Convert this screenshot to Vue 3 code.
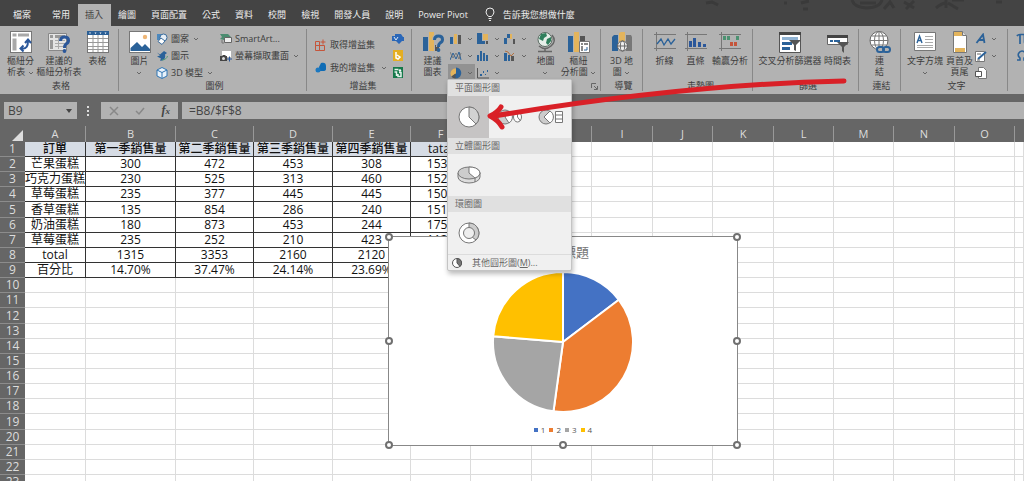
<script setup>
import { ref, computed } from 'vue'

const tabs = ['常用', '插入', '繪圖', '頁面配置', '公式', '資料', '校閱', '檢視', '開發人員', '說明', 'Power Pivot']
const activeTab = ref('插入')
const cellName = ref('B9')
const formula = ref('=B8/$F$8')

const columns = [...'ABCDEFGHIJKLMNO', '']
const cells = [
  ['訂單', '第一季銷售量', '第二季銷售量', '第三季銷售量', '第四季銷售量', 'tatal'],
  ['芒果蛋糕', '300', '472', '453', '308', '1533'],
  ['巧克力蛋糕', '230', '525', '313', '460', '1528'],
  ['草莓蛋糕', '235', '377', '445', '445', '1502'],
  ['香草蛋糕', '135', '854', '286', '240', '1515'],
  ['奶油蛋糕', '180', '873', '453', '244', '1750'],
  ['草莓蛋糕', '235', '252', '210', '423', '1120'],
  ['total', '1315', '3353', '2160', '2120', '8948'],
  ['百分比', '14.70%', '37.47%', '24.14%', '23.69%', '']
]
const rows = Array.from({ length: 23 }, (_, i) => cells[i] || [])

const series = [
  { label: '1', value: 14.7, color: '#4472c4' },
  { label: '2', value: 37.47, color: '#ed7d31' },
  { label: '3', value: 24.14, color: '#a5a5a5' },
  { label: '4', value: 23.69, color: '#ffc000' }
]
const slices = computed(() => {
  let start = 0
  const point = (a) => `${70 + 70 * Math.sin(a)} ${70 - 70 * Math.cos(a)}`
  return series.map((s) => {
    const end = start + (s.value / 100) * Math.PI * 2
    const d = `M70 70L${point(start)}A70 70 0 0 1 ${point(end)}Z`
    start = end
    return { d, color: s.color }
  })
})

const chartTools = [
  { icon: 'column', label: '直條圖' },
  { icon: 'hierarchy', label: '階層圖' },
  { icon: 'waterfall', label: '瀑布圖' },
  { icon: 'line', label: '折線圖' },
  { icon: 'stat', label: '統計圖' },
  { icon: 'combo', label: '組合圖' },
  { icon: 'pie', label: '圓形圖' },
  { icon: 'scatter', label: '散佈圖' }
]
const handles = ['nw', 'ne', 'w', 'e', 'sw', 's', 'se']
</script>

<template>
  <svg class="sprite" aria-hidden="true">
    <symbol id="chev" viewBox="0 0 6 4"><path d="M1 1l2 2 2-2" fill="none" stroke="#666" /></symbol>
    <symbol id="pivot" viewBox="0 0 22 22">
      <rect x=".5" y=".5" width="21" height="21" fill="#fff" stroke="#777" />
      <path d="M2.500 2.500h4v3h-4zM8 2.500h11v3H8zM2.500 7.500h4v12h-4z" fill="#a8a8a8" />
      <path d="M11 17.500c6 1 7-3 7-8M15 12l3-3.500 3 3.500M13.500 14.500l-3 3 3 3" fill="none" stroke="#2b579a" stroke-width="2" />
    </symbol>
    <symbol id="pivotq" viewBox="0 0 22 22">
      <path d="M.5 2.500h18v17H.5z" fill="#e4e4e4" stroke="#888" />
      <path d="M2 4h3v3H2zM7 4h10v3H7zM2 9h3v9H2z" fill="#999" />
      <path d="M7 9.500h10M7 12.500h10M7 15.500h10M10.500 7v11" stroke="#aaa" />
      <path d="M12.500 10q0-4 4-4t4 3.500q0 2.500-2.500 3.500-1.500 1-1.500 4" fill="none" stroke="#2b579a" stroke-width="3" />
      <circle cx="16.500" cy="20" r="1.900" fill="#2b579a" />
    </symbol>
    <symbol id="table" viewBox="0 0 22 22">
      <rect x=".5" y=".5" width="21" height="21" fill="#fff" stroke="#777" />
      <path d="M0 0h22v4H0z" fill="#2b5f96" />
      <path d="M1 7.500h20M1 11.500h20M1 15.500h20M1 18.500h20M6 4v17M11 4v17M16 4v17" stroke="#999" />
      <path d="M2 1.500h2l-1 1.500zM7.500 1.500h2l-1 1.500zM12.500 1.500h2l-1 1.500zM17.500 1.500h2l-1 1.500z" fill="#fff" />
    </symbol>
    <symbol id="picture" viewBox="0 0 22 22">
      <rect x=".5" y=".5" width="21" height="21" fill="#fff" stroke="#777" />
      <path d="M1.500 20v-3l6.500-6 5 5 3-3 5 5v2z" fill="#2b6299" />
      <circle cx="16" cy="6" r="2.200" fill="#eeb677" />
    </symbol>
    <symbol id="shapes" viewBox="0 0 12 12">
      <path d="M1 1h6v6H1z" fill="#4c88bd" /><circle cx="7.500" cy="4.500" r="3.500" fill="#e7eef5" stroke="#3b6c9c" />
      <path d="M5 5l4 3-3 3.500-4-3z" fill="#fff" stroke="#3b6c9c" />
    </symbol>
    <symbol id="bird" viewBox="0 0 12 12">
      <path d="M1 2.500l3 2 4-3.500 3 2-2 1.500c1 4-2 7-5 6l1-2-4-2 3-1z" fill="#2b6299" />
      <path d="M6 10c3 0 5-2 5.500-4" fill="none" stroke="#4c9a76" />
    </symbol>
    <symbol id="cube" viewBox="0 0 12 12">
      <path d="M6 .5l5 2.500v6l-5 2.500-5-2.500V3z" fill="#e9f2fa" stroke="#2f74b3" />
      <path d="M1 3l5 2.500L11 3M6 5.500V11" fill="none" stroke="#2f74b3" />
    </symbol>
    <symbol id="smartart" viewBox="0 0 12 12">
      <path d="M0 1h8l3 3H5L4 7 0 6l2-2z" fill="#4b8c70" /><path d="M4.500 4.500h7v5h-7z" fill="#eee" stroke="#666" /><path d="M2 7v3h2" fill="none" stroke="#777" />
    </symbol>
    <symbol id="capture" viewBox="0 0 12 12">
      <path d="M2 1h9v6H2z" fill="#fff" /><path d="M0 6h2l1-1h2l1 1h1v5H0z" fill="#444" /><circle cx="3.500" cy="8.500" r="1.500" fill="#ddd" /><path d="M9.500 6.500v5M7 9h5" stroke="#2b579a" />
    </symbol>
    <symbol id="store" viewBox="0 0 12 12">
      <path d="M.5 2.500h4v4h-4zM.5 6.500h4v5h-4zM4.500 6.500h5v5h-5z" fill="none" stroke="#c5553b" /><path d="M8 .5v5M5.500 3h5" stroke="#c5553b" />
    </symbol>
    <symbol id="addin" viewBox="0 0 12 12"><path d="M6 1c3-1 5 0 5 3v3q0 2-3 2h-3q-1-1-1-4z" fill="#0f6cb5" /><circle cx="3" cy="8" r="2.500" fill="#1c78c0" /></symbol>
    <symbol id="visio" viewBox="0 0 12 12"><path d="M3 1h6l2 3h1v4h-2L7 11 4 8H0V3h3z" fill="#2a67b8" /><path d="M2 4l2 3 2-3" fill="none" stroke="#dce8f6" /></symbol>
    <symbol id="bing" viewBox="0 0 12 12"><path d="M1 0h10v11H1z" fill="#e4ae22" /><path d="M4 2v6l2 1 2-2-3-2" fill="none" stroke="#fff" stroke-width="1.500" /></symbol>
    <symbol id="people" viewBox="0 0 12 12"><path d="M1 0h10v11H1z" fill="#15784a" /><path d="M2.500 2.500h4M2.500 5h2v4M7 5.500h2v4H6V7" fill="none" stroke="#e4f2eb" stroke-width="1.500" /><circle cx="8" cy="3.500" r="1.200" fill="#fff" /></symbol>
    <symbol id="recommend" viewBox="0 0 22 22">
      <path d="M1 6h5v14H1z" fill="#2b6299" /><path d="M7 1h5v19H7z" fill="#e3b45c" /><path d="M13 14h4v6h-4z" fill="#555" />
      <path d="M12.500 9q0-4 4-4t4 3.500q0 2.500-2.500 3.500-1.500 1-1.500 4" fill="none" stroke="#b2b2b2" stroke-width="5" />
      <path d="M12.500 9q0-4 4-4t4 3.500q0 2.500-2.500 3.500-1.500 1-1.500 4" fill="none" stroke="#2b6299" stroke-width="3" /><circle cx="16.500" cy="19" r="1.900" fill="#2b6299" />
    </symbol>
    <symbol id="column" viewBox="0 0 12 12"><path d="M0 4h3v7H0z" fill="#2b6299" /><path d="M4 1h3v10H4z" fill="#e3b45c" /><path d="M8 2h3v9H8z" fill="#555" /></symbol>
    <symbol id="hierarchy" viewBox="0 0 12 12"><path d="M0 0h5v11H0z" fill="#2b6299" /><path d="M6 1h5v6H6z" fill="#e3b45c" /><path d="M5 8h3v3H5z" fill="#2b6299" /><path d="M9 8h2v3H9z" fill="#555" /></symbol>
    <symbol id="waterfall" viewBox="0 0 12 12"><path d="M0 5h3v6H0z" fill="#2b6299" /><path d="M3 1h3v4H3z" fill="#2b6299" /><path d="M6 1h2v5H6z" fill="#e3b45c" /><path d="M9 6h2v5H9z" fill="#555" /></symbol>
    <symbol id="line" viewBox="0 0 12 12"><path d="M0 10l3-7 3 6 3-7 2 8" fill="none" stroke="#2b6299" /><path d="M0 2l3 6 3-5 3 6 2-6" fill="none" stroke="#666" stroke-width=".7" /></symbol>
    <symbol id="stat" viewBox="0 0 12 12"><path d="M0 5h2v6H0zM3 1h2v10H3zM6 3h2v8H6zM9 5h2v6H9z" fill="#2b6299" /></symbol>
    <symbol id="combo" viewBox="0 0 12 12"><path d="M0 3h3v8H0zM4 5h2v6H4z" fill="#2b6299" /><path d="M7 6h3v5H7z" fill="#555" /><path d="M1 1l3 1 3 4 3-3" fill="none" stroke="#b5713f" /></symbol>
    <symbol id="pie" viewBox="0 0 12 12"><circle cx="5.500" cy="6.500" r="5" fill="#e3b45c" /><path d="M6 6.500V.5a5.500 5.500 0 1 1-4.500 9z" fill="#2b6299" /><path d="M5.500 6.500l-4 3a5 5 0 0 0 4 2z" fill="#555" /></symbol>
    <symbol id="scatter" viewBox="0 0 12 12"><path d="M.5 1v10H12" fill="none" stroke="#555" /><path d="M3 7h2v2H3zM6 4h1v2H6zM8 7h1v1H8zM10 3h1v2h-1z" fill="#2b6299" /></symbol>
    <symbol id="globe" viewBox="0 0 22 22">
      <circle cx="10" cy="8.500" r="7" fill="#e6efe9" stroke="#5a6b62" /><path d="M6 3l5-1 1 3-3 2-1 3-4-2zM12 8l4-2v4l-3 4-2-2z" fill="#2f7f5c" />
      <path d="M4 15q6 5 12 0t1-11M10 17.500V20M3 20.500h14" fill="none" stroke="#666" stroke-width="1.500" />
    </symbol>
    <symbol id="pivotchart" viewBox="0 0 22 22">
      <path d="M0 5h5v16H0z" fill="#2b6299" /><path d="M6 1h5v20H6z" fill="#e3b45c" /><path d="M12 5h5v7h-5z" fill="#555" />
      <path d="M11.500 10.500h10v11h-10z" fill="#fff" stroke="#777" /><path d="M13 12h2v2h-2zM16 12h4v2h-4zM13 15h2v5h-2z" fill="#888" /><path d="M16 19h3v-3" fill="none" stroke="#2b6299" />
    </symbol>
    <symbol id="map3d" viewBox="0 0 22 22">
      <path d="M1 6l2-2h4v16H1z" fill="#2b6299" /><path d="M8 2l2-1h4v12H8z" fill="#e3b45c" /><path d="M15 4h5l1 2v14h-6z" fill="#777" />
      <circle cx="11.500" cy="15" r="5" fill="#eee" stroke="#666" /><ellipse cx="11.500" cy="15" rx="2.200" ry="5" fill="none" stroke="#666" /><path d="M6.500 15h10" stroke="#666" />
    </symbol>
    <symbol id="sparkline" viewBox="0 0 22 22"><path d="M2.500 1v19M0 3.500h22M0 17.500h22" fill="none" stroke="#777" /><path d="M3 13l4-5 3 6 4-6 3 5 4-5" fill="none" stroke="#2b6299" stroke-width="1.300" /></symbol>
    <symbol id="sparkcol" viewBox="0 0 22 22"><path d="M2.500 1v19M0 3.500h22M0 17.500h22" fill="none" stroke="#777" /><path d="M4 10h3v6H4zM8 7h3v9H8zM13 11h3v5h-3zM18 13h3v3h-3z" fill="#2b579a" /></symbol>
    <symbol id="winloss" viewBox="0 0 22 22"><path d="M2.500 1v19M0 3.500h22M0 17.500h22" fill="none" stroke="#777" /><path d="M4 5h3v4H4zM8 5h3v4H8zM17 5h3v4h-3z" fill="#4d9272" /><path d="M11 11h3v4h-3zM15 11h3v4h-3z" fill="#c5553b" /></symbol>
    <symbol id="slicer" viewBox="0 0 22 22">
      <path d="M.5 1.500h21v20H.5z" fill="#fff" stroke="#555" /><path d="M0 1h22v3H0z" fill="#444" /><path d="M3 6h16v3H3z" fill="#8fb2d2" /><path d="M3 11h10v3H3zM3 16h8v3H3z" fill="#2b6299" />
      <path d="M10 9h12l-5 5v6l-2-1v-5z" fill="#555" />
    </symbol>
    <symbol id="timeline" viewBox="0 0 22 22">
      <path d="M.5 4.500h20v9H.5z" fill="#fff" stroke="#666" /><path d="M0 4h21v3H0z" fill="#444" /><path d="M3 10h3M7 10h6" stroke="#2b6299" stroke-width="2" /><path d="M10 11h12l-5 5v6l-2-2v-4z" fill="#555" />
    </symbol>
    <symbol id="link" viewBox="0 0 22 22">
      <circle cx="10" cy="9.500" r="9" fill="#fff" stroke="#666" /><path d="M1 9.500h18M3 5h14M3 14h14M10 .5v18" stroke="#777" /><ellipse cx="10" cy="9.500" rx="4.500" ry="9" fill="none" stroke="#777" />
      <rect x="8" y="16" width="7" height="5" rx="2.500" fill="#b2b2b2" stroke="#2b6299" stroke-width="2" /><rect x="14" y="16" width="7" height="5" rx="2.500" fill="none" stroke="#2b6299" stroke-width="2" />
    </symbol>
    <symbol id="textbox" viewBox="0 0 22 22">
      <path d="M.5 1.500h21v18H.5z" fill="#fff" stroke="#777" /><path d="M3 12l2.500-7L8 12M4 9.500h3" fill="none" stroke="#2b6299" stroke-width="1.400" /><path d="M11 5.500h8M11 8.500h8M11 11.500h8M3 14.500h16M3 16.500h16" stroke="#aaa" />
    </symbol>
    <symbol id="headfoot" viewBox="0 0 22 22">
      <path d="M4.500 .5h9l4 4v17h-13z" fill="#fff" stroke="#777" /><path d="M5 1h8v4H5zM6 17h10v4H6z" fill="#e3b45c" /><path d="M13.500 .5v4h4" fill="#ddd" stroke="#777" />
    </symbol>
    <symbol id="wordart" viewBox="0 0 12 12"><path d="M1.500 10L8 1.500 9.500 10M4 7h5" fill="none" stroke="#2b6299" stroke-width="1.800" /></symbol>
    <symbol id="sign" viewBox="0 0 12 12"><path d="M.5 1.500h9v10h-9z" fill="#fff" stroke="#777" /><path d="M3 9l8-7" stroke="#2b6299" stroke-width="2" /><path d="M2 4h4M2 10h3" stroke="#666" /></symbol>
    <symbol id="object" viewBox="0 0 12 12"><path d="M3.500 .5h5l3 3v8h-8z" fill="#fff" stroke="#777" /><path d="M.5 4.500h6v5h-6z" fill="#fff" stroke="#555" /></symbol>
    <symbol id="pi" viewBox="0 0 12 12"><path d="M1 3q1-1.500 3-1.500h7M4 2v9M8.500 2v7q0 2 2 1" fill="none" stroke="#2b6299" stroke-width="1.700" /></symbol>
    <symbol id="omega" viewBox="0 0 12 12"><path d="M1 10h3V8Q1.500 6 2.500 3.500 4 1 6 1t3.500 2.500Q10.500 6 8 8v2h3" fill="none" stroke="#2b6299" stroke-width="1.600" /></symbol>
  </svg>

  <div class="app">
    <nav class="tabs">
      <svg class="pattern" width="320" height="14" viewBox="0 0 320 14" fill="none" stroke="#3a3a3a" stroke-width="3" aria-hidden="true">
        <path d="M2 3l6-1 6 3M80 3h3M97 3l8-2M99 9h5" />
        <path d="M148 0q2 7 14 8 14 0 16-8M156 3h16M180 9l6-7 4 6M200 2l10 6M210 1l-8 8M232 8q6-5 10-5M242 0v8M244 3l10 6M248 0h12M292 2h6" />
      </svg>
      <button class="tab file">檔案</button>
      <button v-for="t in tabs" :key="t" class="tab" :class="{ active: t === activeTab }" @click="activeTab = t">{{ t }}</button>
      <button class="tell">
        <svg width="10" height="14" viewBox="0 0 10 14" fill="none" stroke="#eee"><path d="M3.500 9.500Q1 7 1 5a4 4 0 0 1 8 0q0 2-2.500 4.500zM3.500 11.500h3M4 13.500h2" /></svg>
        告訴我您想做什麼
      </button>
    </nav>

    <div class="ribbon">
      <section class="group g-tables">
        <div class="tools">
          <button class="big w33"><svg class="ico"><use href="#pivot" /></svg><span>樞紐分<br>析表 <svg class="chev"><use href="#chev" /></svg></span></button>
          <button class="big w44"><svg class="ico"><use href="#pivotq" /></svg><span>建議的<br>樞紐分析表</span></button>
          <button class="big w33"><svg class="ico"><use href="#table" /></svg><span>表格</span></button>
        </div>
        <h2>表格</h2>
      </section>

      <section class="group g-illus">
        <div class="tools">
          <button class="big w33"><svg class="ico"><use href="#picture" /></svg><span>圖片<br><svg class="chev"><use href="#chev" /></svg></span></button>
          <div class="stack w64">
            <button class="small"><svg class="mini"><use href="#shapes" /></svg>圖案<svg class="chev"><use href="#chev" /></svg></button>
            <button class="small"><svg class="mini"><use href="#bird" /></svg>圖示</button>
            <button class="small"><svg class="mini"><use href="#cube" /></svg>3D 模型<svg class="chev"><use href="#chev" /></svg></button>
          </div>
          <div class="stack">
            <button class="small"><svg class="mini"><use href="#smartart" /></svg>SmartArt...</button>
            <button class="small"><svg class="mini"><use href="#capture" /></svg>螢幕擷取畫面<svg class="chev"><use href="#chev" /></svg></button>
          </div>
        </div>
        <h2>圖例</h2>
      </section>

      <section class="group g-addins">
        <div class="tools">
          <div class="stack roomy">
            <button class="small"><svg class="mini"><use href="#store" /></svg>取得增益集</button>
            <button class="small wide"><svg class="mini"><use href="#addin" /></svg>我的增益集<svg class="chev"><use href="#chev" /></svg></button>
          </div>
          <div class="stack">
            <button class="small" aria-label="Visio"><svg class="mini"><use href="#visio" /></svg></button>
            <button class="small" aria-label="Bing"><svg class="mini"><use href="#bing" /></svg></button>
            <button class="small" aria-label="People"><svg class="mini"><use href="#people" /></svg></button>
          </div>
        </div>
        <h2>增益集</h2>
      </section>

      <section class="group g-charts">
        <div class="tools">
          <button class="big w33"><svg class="ico"><use href="#recommend" /></svg><span>建議<br>圖表</span></button>
          <div class="chart-grid">
            <button v-for="c in chartTools" :key="c.icon" class="small" :class="{ pressed: c.icon === 'pie' }" :aria-label="c.label">
              <svg class="mini"><use :href="'#' + c.icon" /></svg><svg class="chev"><use href="#chev" /></svg>
            </button>
          </div>
          <button class="big w33"><svg class="ico"><use href="#globe" /></svg><span>地圖<br><svg class="chev"><use href="#chev" /></svg></span></button>
          <button class="big w33"><svg class="ico"><use href="#pivotchart" /></svg><span>樞紐<br>分析圖 <svg class="chev"><use href="#chev" /></svg></span></button>
        </div>
        <button class="launch" aria-label="圖表選項"><svg width="7" height="7" viewBox="0 0 7 7" fill="none" stroke="#666"><path d="M.5 5V.5H5M3 3l3 3M6.500 3v3.500H3" /></svg></button>

        <div class="menu">
          <h3>平面圖形圖</h3>
          <div class="options">
            <button class="opt selected" aria-label="圓形圖">
              <svg width="22" height="22" viewBox="0 0 22 22" stroke="#777"><circle cx="11" cy="11" r="10" fill="#fff" /><path d="M11 11V1a10 10 0 0 1 7 17z" fill="#d2d2d2" /></svg>
            </button>
            <button class="opt" aria-label="子母圓形圖">
              <svg width="28" height="22" viewBox="0 0 28 22" stroke="#777"><circle cx="9" cy="11" r="7" fill="#ccc" /><path d="M9 11l4-6a7 7 0 0 1 0 12z" fill="#fff" /><ellipse cx="21.500" cy="11" rx="4" ry="5" fill="#fff" /><path d="M21.500 6v5l3 4" fill="none" /></svg>
            </button>
            <button class="opt" aria-label="圓形圖帶有子橫條圖">
              <svg width="28" height="22" viewBox="0 0 28 22" stroke="#777"><circle cx="9" cy="11" r="7" fill="#ccc" /><path d="M7 11l6-6a7 7 0 0 1 0 12z" fill="#fff" /><path d="M18.500 5.500h7v11h-7zM18.500 9h7M18.500 13h7" fill="#fff" /></svg>
            </button>
          </div>
          <h3>立體圖形圖</h3>
          <div class="options">
            <button class="opt" aria-label="立體圓形圖">
              <svg width="24" height="18" viewBox="0 0 24 18" stroke="#777"><path d="M1 7v4a11 6 0 0 0 22 0V7" fill="#ddd" /><ellipse cx="12" cy="7" rx="11" ry="6" fill="#ccc" /><path d="M12 7V1a11 6 0 0 1 6 11zM18 12v4" fill="#fff" /></svg>
            </button>
          </div>
          <h3>環圈圖</h3>
          <div class="options">
            <button class="opt" aria-label="環圈圖">
              <svg width="22" height="22" viewBox="0 0 22 22" stroke="#777"><circle cx="11" cy="11" r="10" fill="#fff" /><path d="M11 1a10 10 0 0 1 7 17l-4-3a5 5 0 0 0-3-9z" fill="#ccc" /><circle cx="11" cy="11" r="5.500" fill="#eee" /></svg>
            </button>
          </div>
          <button class="more">
            <svg width="10" height="10" viewBox="0 0 10 10" stroke="#555"><circle cx="5" cy="5" r="4.500" fill="#fff" /><path d="M5 5V.5A4.500 4.500 0 0 1 8 8.500z" fill="#777" /></svg>
            <span>其他圓形圖(<u>M</u>)...</span>
          </button>
        </div>
      </section>

      <section class="group g-tour">
        <div class="tools"><button class="big w33"><svg class="ico"><use href="#map3d" /></svg><span>3D 地<br>圖 <svg class="chev"><use href="#chev" /></svg></span></button></div>
        <h2>導覽</h2>
      </section>

      <section class="group g-spark">
        <div class="tools">
          <button class="big w30"><svg class="ico"><use href="#sparkline" /></svg><span>折線</span></button>
          <button class="big w30"><svg class="ico"><use href="#sparkcol" /></svg><span>直條</span></button>
          <button class="big w38"><svg class="ico"><use href="#winloss" /></svg><span>輸贏分析</span></button>
        </div>
        <h2>走勢圖</h2>
      </section>

      <section class="group g-filter">
        <div class="tools">
          <button class="big w64"><svg class="ico"><use href="#slicer" /></svg><span>交叉分析篩選器</span></button>
          <button class="big w30"><svg class="ico"><use href="#timeline" /></svg><span>時間表</span></button>
        </div>
        <h2>篩選</h2>
      </section>

      <section class="group g-link">
        <div class="tools"><button class="big w33"><svg class="ico"><use href="#link" /></svg><span>連<br>結</span></button></div>
        <h2>連結</h2>
      </section>

      <section class="group g-text">
        <div class="tools">
          <button class="big w38"><svg class="ico"><use href="#textbox" /></svg><span>文字方塊<br><svg class="chev"><use href="#chev" /></svg></span></button>
          <button class="big w30"><svg class="ico"><use href="#headfoot" /></svg><span>頁首及<br>頁尾</span></button>
          <div class="stack">
            <button class="small" aria-label="文字藝術師"><svg class="mini"><use href="#wordart" /></svg><svg class="chev"><use href="#chev" /></svg></button>
            <button class="small" aria-label="簽名欄"><svg class="mini"><use href="#sign" /></svg><svg class="chev"><use href="#chev" /></svg></button>
            <button class="small" aria-label="物件"><svg class="mini"><use href="#object" /></svg></button>
          </div>
        </div>
        <h2>文字</h2>
      </section>

      <section class="group g-symbol">
        <div class="tools">
          <div class="stack">
            <button class="small" aria-label="方程式"><svg class="mini"><use href="#pi" /></svg></button>
            <button class="small" aria-label="符號"><svg class="mini"><use href="#omega" /></svg></button>
          </div>
        </div>
      </section>
    </div>

    <div class="formula-bar">
      <div class="name-box">
        <input v-model="cellName" aria-label="名稱方塊">
        <svg width="6" height="4" viewBox="0 0 6 4"><path d="M0 0h6L3 4z" fill="#444" /></svg>
      </div>
      <svg class="dots" width="3" height="11" viewBox="0 0 3 11" fill="#ddd"><path d="M0 1h2v2H0zM0 5h2v2H0zM0 9h2v2H0z" /></svg>
      <div class="fx">
        <button aria-label="取消"><svg width="10" height="10" viewBox="0 0 10 10"><path d="M1 1l8 8M9 1L1 9" fill="none" stroke="#888" stroke-width="1.500" /></svg></button>
        <button aria-label="輸入"><svg width="10" height="10" viewBox="0 0 10 10"><path d="M1 5l3 3 5-6" fill="none" stroke="#888" stroke-width="1.500" /></svg></button>
        <button class="fn" aria-label="插入函數">f<small>x</small></button>
      </div>
      <input v-model="formula" class="formula" aria-label="資料編輯列">
    </div>

    <main class="sheet">
      <table>
        <colgroup>
          <col class="c-head"><col class="c61"><col class="c90"><col class="c78"><col class="c79"><col class="c78">
          <col class="c60"><col class="c61"><col class="c60"><col class="c61"><col class="c60"><col class="c61"><col class="c60">
          <col class="c60"><col class="c61"><col class="c60"><col>
        </colgroup>
        <thead>
          <tr>
            <th class="corner"><svg width="11" height="11" viewBox="0 0 11 11"><path d="M11 0v11H0z" fill="#ddd" /></svg></th>
            <th v-for="c in columns" :key="c" scope="col"><span>{{ c }}</span></th>
          </tr>
        </thead>
        <tbody>
          <tr v-for="(r, i) in rows" :key="i">
            <th scope="row">{{ i + 1 }}</th>
            <td v-for="(c, j) in columns" :key="c" :class="{ filled: i < 9 && j < 6, title: i === 0 && j < 6 }">{{ r[j] }}</td>
          </tr>
        </tbody>
      </table>

      <figure class="chart">
        <figcaption>圖表標題</figcaption>
        <svg class="pie" width="140" height="140" viewBox="0 0 140 140" stroke="#fff" stroke-width="2" stroke-linejoin="round">
          <path v-for="s in slices" :key="s.color" :d="s.d" :fill="s.color" />
        </svg>
        <ul>
          <li v-for="s in series" :key="s.label"><i :style="{ background: s.color }"></i>{{ s.label }}</li>
        </ul>
        <b v-for="h in handles" :key="h" class="handle" :class="h"></b>
      </figure>
    </main>

    <svg class="arrow" width="364" height="58" viewBox="0 0 364 58" fill="none" stroke="#d92027" stroke-linecap="round" stroke-linejoin="round" aria-hidden="true">
      <path d="M360 6Q204 9 10 41" stroke-width="5" />
      <path d="M17 32Q14 37 6 41q8 4 12 11" stroke-width="5" />
    </svg>
  </div>
</template>

<style>
body { margin: 0; }
</style>

<style scoped>
* { box-sizing: border-box; }
.sprite { position: absolute; width: 0; height: 0; }
.app { position: relative; height: 100vh; overflow: hidden; background: #666; color: #3c3c3c; font: 9px/11px "Open Sans", "Noto Sans CJK TC", sans-serif; }
button, input { border: 0; padding: 0; margin: 0; background: none; font: inherit; color: inherit; }
h2, h3, figure, ul { margin: 0; padding: 0; font: inherit; }
svg { display: block; flex: none; }

.tabs { position: relative; display: flex; align-items: flex-end; height: 26px; background: #444; color: #eee; }
.pattern { position: absolute; right: 0; top: 0; }
.tab { height: 22px; padding: 0 8px 2px 7px; white-space: nowrap; }
.tab.file { padding: 0 14px 2px 13px; }
.tab.active { background: #b2b2b2; color: #444; }
.tell { display: flex; align-items: center; gap: 8px; height: 22px; margin-left: 9px; padding-bottom: 2px; white-space: nowrap; }

.ribbon { display: flex; height: 68px; background: #b2b2b2; }
.group { position: relative; flex: none; display: flex; flex-direction: column; justify-content: space-between; margin: 3px 0; padding-top: 2px; border-right: 1px solid #888; white-space: nowrap; }
.group h2 { text-align: center; }
.tools { display: flex; height: 48px; }
.g-tables { width: 119px; padding-left: 4px; }
.g-illus { width: 188px; padding-left: 4px; }
.g-addins { width: 105px; padding-left: 8px; }
.g-charts { width: 189px; padding-left: 4px; }
.g-tour { width: 42px; padding-left: 4px; }
.g-spark { width: 110px; padding-left: 6px; }
.g-filter { width: 106px; padding-left: 5px; }
.g-link { width: 42px; padding-left: 4px; }
.g-text { width: 107px; padding-left: 5px; }
.g-symbol { flex: 1; padding-left: 8px; border: 0; overflow: hidden; }
.big { flex: none; display: flex; flex-direction: column; align-items: center; gap: 2px; }
.big span { text-align: center; }
.ico { width: 22px; height: 22px; }
.mini { width: 12px; height: 12px; }
.chev { display: inline-block; width: 6px; height: 4px; vertical-align: middle; }
.w30 { width: 31px; }
.w33 { width: 33px; }
.w38 { width: 38px; }
.w44 { width: 44px; }
.w64 { width: 64px; }
.stack { display: flex; flex-direction: column; height: 51px; margin-top: -3px; }
.stack.roomy { padding: 3px 0 2px; width: 77px; }
.stack.roomy .small { height: 23px; }
.small { display: flex; align-items: center; gap: 3px; height: 17px; flex: none; }
.stack { margin-top: -1px; }
.small.wide .chev { margin-left: 3px; }
.small:not(.wide) .chev { margin-left: 1px; }
.chart-grid { display: grid; grid-template-columns: repeat(3, 27px); grid-auto-rows: 17px; width: 81px; margin: -1px 0 0 -1px; }
.chart-grid .small { padding-left: 2px; gap: 4px; }
.chart-grid .pressed { background: #929292; }
.launch { position: absolute; right: 2px; bottom: 1px; }

.menu { position: absolute; z-index: 3; top: 50px; left: 35px; width: 125px; background: #f0f0f0; border: 1px solid #c4c4c4; border-radius: 2px; box-shadow: 1px 3px 5px #0004; color: #666; }
.menu h3 { height: 16px; padding-left: 7px; line-height: 16px; background: #e0e0e0; }
.options { display: flex; height: 42px; }
.opt { display: flex; width: 41px; align-items: center; justify-content: center; }
.opt.selected { background: #c6c4c4; }
.more { display: flex; align-items: center; gap: 10px; width: 100%; height: 16px; padding-left: 4px; border-top: 1px solid #dcdcdc; }

.formula-bar { display: flex; height: 17px; margin-top: 8px; padding-left: 4px; font-size: 12px; color: #444; }
.formula-bar input { min-width: 0; }
.name-box { display: flex; align-items: center; width: 73px; padding: 0 5px 0 4px; background: #b2b2b2; }
.name-box input { flex: 1; }
.dots { margin: 3px 11px 0 10px; }
.fx { display: flex; align-items: center; justify-content: space-around; width: 77px; background: #b2b2b2; }
.fn { font: italic bold 12px/14px "Liberation Serif", serif; }
.fn small { font-size: 9px; }
.formula { flex: 1; margin-left: 4px; padding-left: 7px; background: #b2b2b2; }

.sheet { position: relative; }
table { width: 100%; table-layout: fixed; border-collapse: separate; border-spacing: 0; font-size: 12px; line-height: 14px; background: #fff; color: #111; }
.c-head { width: 25px; }
.c60 { width: 60px; }
.c61 { width: 61px; }
.c78 { width: 78px; }
.c79 { width: 79px; }
.c90 { width: 90px; }
th, td { padding: 0; height: 15px; text-align: center; white-space: nowrap; font-weight: normal; }
thead th { height: 23px; padding-top: 7px; background: #666; color: #ddd; font-size: 11px; }
thead span { display: block; height: 16px; line-height: 16px; border-right: 1px solid #999; }
thead th:last-child span { border: 0; }
.corner svg { margin: 2px 2px 0 auto; }
tbody th { background: #666; color: #ddd; border-bottom: 1px solid #8c8c8c; }
tbody tr:nth-child(7n + 5) > * { height: 16px; }
td { border-right: 1px solid #dcdcdc; border-bottom: 1px solid #dcdcdc; }
td.filled { border-color: #333; }
td.title { background: #d6dce5; font-weight: 500; }

.chart { position: absolute; left: 388px; top: 117px; width: 350px; height: 210px; display: flex; flex-direction: column; align-items: center; background: #fff; border: 1px solid #888; }
figcaption { margin-top: 7px; font-size: 13px; line-height: 16px; color: #757575; }
.pie { margin-top: 12px; }
.chart ul { display: flex; gap: 4px; margin-top: 13px; list-style: none; font-size: 8px; line-height: 10px; color: #555; }
.chart li { display: flex; align-items: center; gap: 3px; }
.chart i { width: 4px; height: 4px; }
.handle { position: absolute; width: 8px; height: 8px; margin: -4px; border: 2px solid #707070; border-radius: 50%; background: #fff; }
.nw, .ne { top: 0; }
.w, .e { top: 50%; }
.sw, .s, .se { top: 100%; }
.nw, .w, .sw { left: 0; }
.s { left: 50%; }
.ne, .e, .se { left: 100%; }
.arrow { position: absolute; z-index: 4; left: 484px; top: 75px; pointer-events: none; }
</style>
